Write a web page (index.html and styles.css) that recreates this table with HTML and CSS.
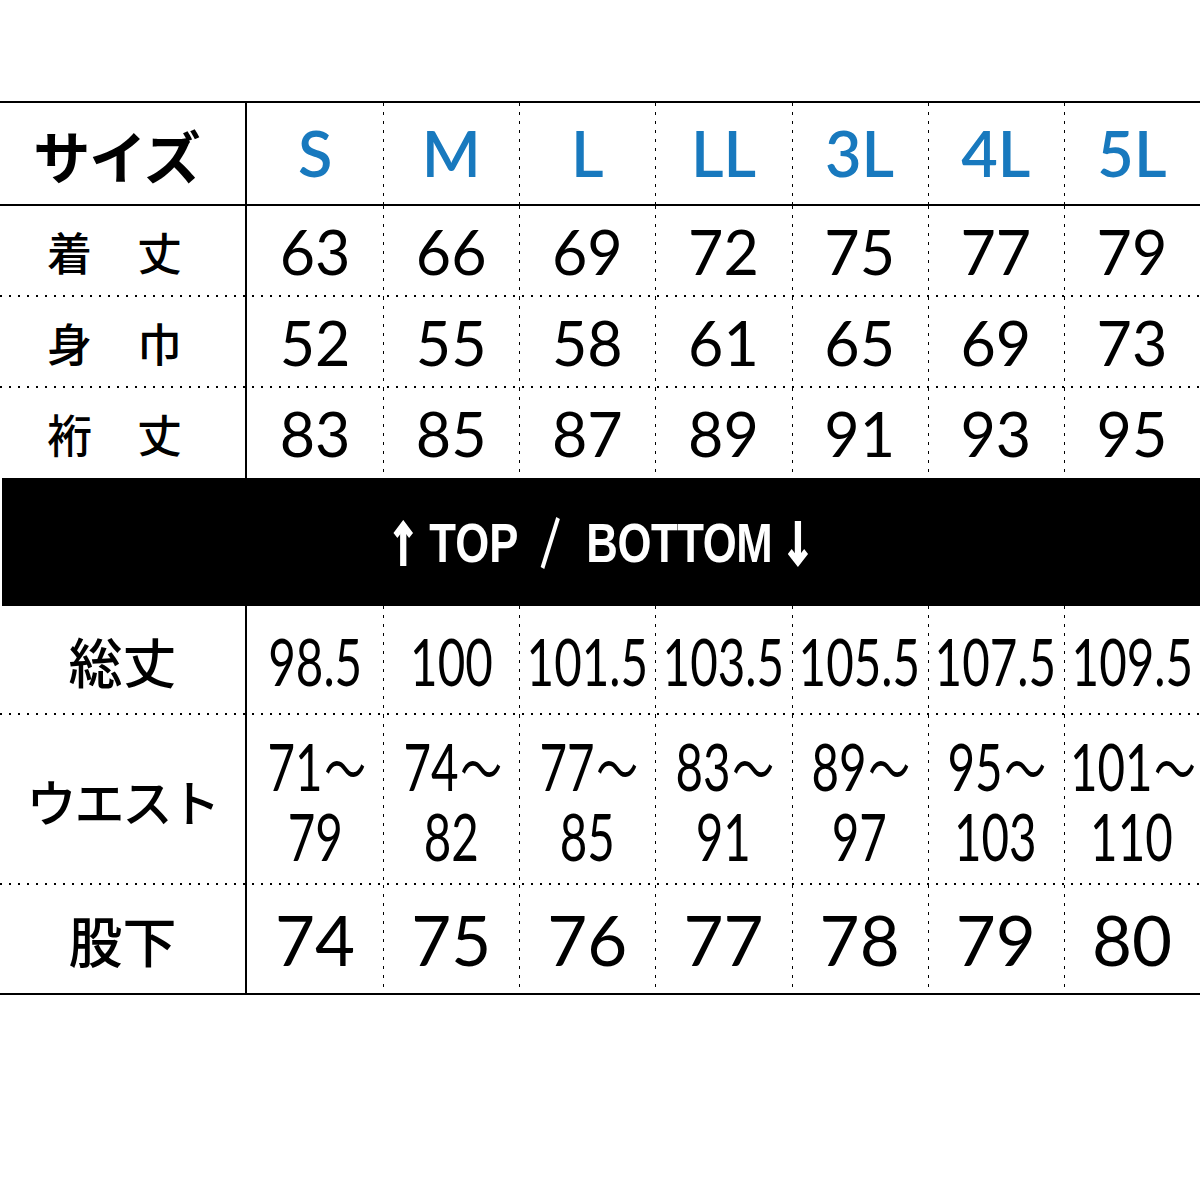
FILE: index.html
```html
<!DOCTYPE html>
<html lang="ja">
<head>
<meta charset="utf-8">
<title>サイズ表</title>
<link rel="stylesheet" href="styles.css">
</head>
<body>
<div class="sheet">
  <div class="row head">
    <div class="label title">サイズ</div>
    <div class="cell size">S</div>
    <div class="cell size">M</div>
    <div class="cell size">L</div>
    <div class="cell size">LL</div>
    <div class="cell size">3L</div>
    <div class="cell size">4L</div>
    <div class="cell size">5L</div>
  </div>
  <div class="row r1 dotted">
    <div class="label spaced">着　丈</div>
    <div class="cell num">63</div>
    <div class="cell num">66</div>
    <div class="cell num">69</div>
    <div class="cell num">72</div>
    <div class="cell num">75</div>
    <div class="cell num">77</div>
    <div class="cell num">79</div>
  </div>
  <div class="row r2 dotted">
    <div class="label spaced">身　巾</div>
    <div class="cell num">52</div>
    <div class="cell num">55</div>
    <div class="cell num">58</div>
    <div class="cell num">61</div>
    <div class="cell num">65</div>
    <div class="cell num">69</div>
    <div class="cell num">73</div>
  </div>
  <div class="row r3">
    <div class="label spaced">裄　丈</div>
    <div class="cell num">83</div>
    <div class="cell num">85</div>
    <div class="cell num">87</div>
    <div class="cell num">89</div>
    <div class="cell num">91</div>
    <div class="cell num">93</div>
    <div class="cell num">95</div>
  </div>
  <div class="band">
    <div class="band-inner">
      <svg class="arrow up" viewBox="0 0 27 46" width="27" height="46" aria-hidden="true">
        <path d="M13.5 6 V46" stroke="#fff" stroke-width="8" fill="none"/>
        <path d="M3.5 15.5 L13.5 5 L23.5 15.5" stroke="#fff" stroke-width="7" fill="none" stroke-linejoin="miter"/>
      </svg>
      <span class="bt">TOP</span>
      <svg class="slash" viewBox="0 0 26 52" width="26" height="52" aria-hidden="true">
        <path d="M23 1 L3 51" stroke="#fff" stroke-width="5" fill="none"/>
      </svg>
      <span class="bt bottom">BOTTOM</span>
      <svg class="arrow down" viewBox="0 0 29 46" width="29" height="46" aria-hidden="true">
        <path d="M14.5 0 V40" stroke="#fff" stroke-width="8" fill="none"/>
        <path d="M4 30.5 L14.5 41 L25 30.5" stroke="#fff" stroke-width="7" fill="none" stroke-linejoin="miter"/>
      </svg>
    </div>
  </div>
  <div class="row r4 dotted">
    <div class="label low">総丈</div>
    <div class="cell cond"><span>98.5</span></div>
    <div class="cell cond"><span>100</span></div>
    <div class="cell cond"><span>101.5</span></div>
    <div class="cell cond"><span>103.5</span></div>
    <div class="cell cond"><span>105.5</span></div>
    <div class="cell cond"><span>107.5</span></div>
    <div class="cell cond"><span>109.5</span></div>
  </div>
  <div class="row r5 dotted">
    <div class="label low waist">ウエスト</div>
    <div class="cell cond"><div class="pair"><div class="ln">71<span class="tilde">〜</span></div><div class="ln">79</div></div></div>
    <div class="cell cond"><div class="pair"><div class="ln">74<span class="tilde">〜</span></div><div class="ln">82</div></div></div>
    <div class="cell cond"><div class="pair"><div class="ln">77<span class="tilde">〜</span></div><div class="ln">85</div></div></div>
    <div class="cell cond"><div class="pair"><div class="ln">83<span class="tilde">〜</span></div><div class="ln">91</div></div></div>
    <div class="cell cond"><div class="pair"><div class="ln">89<span class="tilde">〜</span></div><div class="ln">97</div></div></div>
    <div class="cell cond"><div class="pair"><div class="ln">95<span class="tilde">〜</span></div><div class="ln">103</div></div></div>
    <div class="cell cond"><div class="pair"><div class="ln">101<span class="tilde">〜</span></div><div class="ln">110</div></div></div>
  </div>
  <div class="row r6 last">
    <div class="label low">股下</div>
    <div class="cell big">74</div>
    <div class="cell big">75</div>
    <div class="cell big">76</div>
    <div class="cell big">77</div>
    <div class="cell big">78</div>
    <div class="cell big">79</div>
    <div class="cell big">80</div>
  </div>
</div>
</body>
</html>
```
FILE: styles.css
```css
html, body {
  margin: 0;
  padding: 0;
  background: #fff;
}

.sheet {
  margin-top: 101px;
  width: 1200px;
  color: #000;
}

.row {
  display: grid;
  grid-template-columns: 247px repeat(7, 1fr);
  box-sizing: border-box;
}

.row.dotted {
  background-image: linear-gradient(to right, #000 2px, transparent 2px);
  background-size: 9px 2px;
  background-repeat: repeat-x;
  background-position: 0 100%;
}

.label {
  border-right: 2px solid #000;
  display: flex;
  align-items: center;
  justify-content: center;
  font-family: "Noto Sans CJK JP", sans-serif;
  white-space: nowrap;
}

.cell {
  display: flex;
  align-items: center;
  justify-content: center;
  white-space: nowrap;
  min-width: 0;
}

.cell + .cell {
  background-image: linear-gradient(#000 3px, transparent 3px);
  background-size: 2px 9px;
  background-repeat: repeat-y;
  background-position: -1px 0;
}

/* header */
.head {
  height: 105px;
  border-top: 2px solid #000;
  border-bottom: 2px solid #000;
}

.title {
  font-size: 57px;
  font-weight: 700;
  padding-right: 12px;
  letter-spacing: -1px;
}

.size {
  font-family: Lato, "Open Sans", sans-serif;
  font-weight: 600;
  font-size: 63px;
  color: #1879be;
  padding-bottom: 2px;
}

/* upper rows */
.r1, .r2 { height: 91px; }
.r3 { height: 90px; }

.spaced {
  font-size: 45px;
  font-weight: 500;
  padding-right: 16px;
}

.num {
  font-family: Lato, "Open Sans", sans-serif;
  font-size: 61px;
  font-weight: 400;
}

/* band */
.band {
  height: 128px;
  margin-left: 2px;
  background: #000;
  display: flex;
  align-items: center;
  justify-content: center;
}

.band-inner {
  display: flex;
  align-items: flex-end;
  color: #fff;
  font-family: "Liberation Sans", Arial, sans-serif;
  font-weight: 700;
  font-size: 56px;
  line-height: 1;
  transform: scaleX(0.78);
  white-space: nowrap;
  margin-top: 2px;
}

.bt {
  display: block;
  line-height: 56px;
  height: 56px;
}

.bt.bottom {
  letter-spacing: -0.5px;
}

.arrow {
  display: block;
  margin-bottom: 5px;
}

.arrow.up { margin-right: 20px; }
.arrow.down { margin-left: 18px; margin-bottom: 4px; }

.slash {
  display: block;
  margin: 0 33px 2px 28px;
}

/* lower rows */
.r4 { height: 109px; }
.r5 { height: 170px; }
.r6 { height: 110px; }

.last {
  border-bottom: 2px solid #000;
}

.low {
  font-size: 54px;
  font-weight: 500;
}

.waist {
  font-size: 50px;
  letter-spacing: -2px;
}

.cond > span {
  display: inline-block;
  font-family: Lato, "Open Sans", sans-serif;
  font-size: 66px;
  font-weight: 400;
  line-height: 1;
  transform: scaleX(0.72);
}

.pair {
  display: flex;
  flex-direction: column;
  align-items: center;
  gap: 4px;
  padding-top: 2px;
  font-family: Lato, "Open Sans", sans-serif;
  font-size: 66px;
  font-weight: 400;
  transform: scaleX(0.72);
}

.ln {
  height: 66px;
  line-height: 66px;
  display: flex;
  align-items: center;
  justify-content: center;
}

.tilde {
  font-family: "Noto Sans CJK JP", sans-serif;
  font-size: 58px;
  line-height: 1;
  margin-left: 2px;
  margin-right: -4px;
}

.big {
  font-family: Lato, "Open Sans", sans-serif;
  font-size: 69px;
  font-weight: 400;
}
```
